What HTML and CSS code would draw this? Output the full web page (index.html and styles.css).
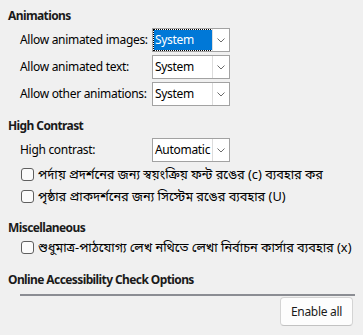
FILE: index.html
```html
<!DOCTYPE html>
<html>
<head>
<meta charset="utf-8">
<link rel="stylesheet" href="styles.css">
</head>
<body>
<div class="page">
  <section class="sec sec-anim">
    <h2 class="heading">Animations</h2>
    <div class="grid">
      <span class="label">Allow animated images:</span>
      <div class="combo focused"><span class="value"><span class="sel">System</span></span><span class="btn"><svg viewBox="0 0 8 5" width="8" height="5"><path d="M0.5 0.5 L4 4 L7.5 0.5" fill="none" stroke="#6b6b6b" stroke-width="1"/></svg></span></div>
      <span class="label">Allow animated text:</span>
      <div class="combo"><span class="value">System</span><span class="btn"><svg viewBox="0 0 8 5" width="8" height="5"><path d="M0.5 0.5 L4 4 L7.5 0.5" fill="none" stroke="#6b6b6b" stroke-width="1"/></svg></span></div>
      <span class="label">Allow other animations:</span>
      <div class="combo"><span class="value">System</span><span class="btn"><svg viewBox="0 0 8 5" width="8" height="5"><path d="M0.5 0.5 L4 4 L7.5 0.5" fill="none" stroke="#6b6b6b" stroke-width="1"/></svg></span></div>
    </div>
  </section>
  <section class="sec sec-hc">
    <h2 class="heading">High Contrast</h2>
    <div class="grid">
      <span class="label">High contrast:</span>
      <div class="combo"><span class="value">Automatic</span><span class="btn"><svg viewBox="0 0 8 5" width="8" height="5"><path d="M0.5 0.5 L4 4 L7.5 0.5" fill="none" stroke="#6b6b6b" stroke-width="1"/></svg></span></div>
    </div>
    <div class="checks">
      <label class="check"><span class="box"></span><span class="ctext">পর্দায় প্রদর্শনের জন্য স্বয়ংক্রিয় ফন্ট রঙের (c) ব্যবহার কর</span></label>
      <label class="check"><span class="box"></span><span class="ctext">পৃষ্ঠার প্রাকদর্শনের জন্য সিস্টেম রঙের ব্যবহার (U)</span></label>
    </div>
  </section>
  <section class="sec sec-misc">
    <h2 class="heading">Miscellaneous</h2>
    <div class="checks">
      <label class="check"><span class="box"></span><span class="ctext">শুধুমাত্র-পাঠযোগ্য লেখ নথিতে লেখা নির্বাচন কার্সার ব্যবহার (x)</span></label>
    </div>
  </section>
  <section class="sec sec-online">
    <h2 class="heading">Online Accessibility Check Options</h2>
    <div class="rule"></div>
    <div class="actions"><button class="button">Enable all</button></div>
  </section>
</div>
</body>
</html>
```

FILE: styles.css
```css
html, body {
  margin: 0;
  padding: 0;
  background: #f0f0f0;
}
body {
  font-family: "Noto Sans", "Noto Sans Bengali", "Lohit Bengali", "FreeSans", sans-serif;
  font-size: 12px;
  color: #000;
  letter-spacing: -0.3px;
}
.page {
  padding: 8px 8px 0 8px;
}
.heading {
  margin: 0;
  font-size: 12px;
  font-weight: 700;
  line-height: 16px;
  color: #1a1a1a;
  letter-spacing: -0.6px;
}
.grid {
  display: grid;
  grid-template-columns: 132px 78px;
  row-gap: 3px;
  padding-left: 12px;
  margin-top: 4px;
  align-items: center;
}
.label {
  white-space: nowrap;
  line-height: 16px;
}
.combo {
  display: flex;
  height: 24px;
  box-sizing: border-box;
  border: 1px solid #a2a2a2;
  background: #fff;
}
.value {
  flex: 1;
  display: flex;
  align-items: stretch;
  padding: 1px;
  line-height: 20px;
  padding-left: 2px;
}
.focused .value {
  padding: 1px 0 1px 1px;
}
.sel {
  flex: 1;
  background: #0078d7;
  color: #fff;
  outline: 1px dotted #000;
  padding-left: 1px;
  line-height: 20px;
}
.btn {
  width: 16px;
  border-left: 1px solid #dcdcdc;
  display: flex;
  align-items: center;
  justify-content: center;
}
.sec-hc { margin-top: 12px; }
.sec-misc { margin-top: 15px; }
.sec-online { margin-top: 16px; }
.checks {
  padding-left: 13px;
  display: flex;
  flex-direction: column;
  gap: 4px;
  margin-top: 3px;
}
.sec-misc .checks { margin-top: 2px; }
.check {
  display: flex;
  align-items: center;
  gap: 4px;
  height: 18px;
  line-height: 18px;
  white-space: nowrap;
}
.ctext {
  letter-spacing: 0;
  font-size: 12.8px;
}
.box {
  width: 13px;
  height: 13px;
  box-sizing: border-box;
  border: 1px solid #5f5f5f;
  border-radius: 3px;
  background: #fbfbfb;
  flex: none;
}
.rule {
  height: 2px;
  background: #8b8d93;
  margin: 6px 0 0 12px;
  width: 335px;
}
.actions {
  display: flex;
  justify-content: flex-end;
  padding-right: 2px;
  margin-top: 1px;
}
.button {
  font-family: inherit;
  font-size: 12px;
  letter-spacing: -0.3px;
  color: #1a1a1a;
  width: 73px;
  height: 29px;
  background: #fdfdfd;
  border: 1px solid #d4d4d4;
  border-bottom-color: #c2c2c2;
  border-radius: 4px;
  padding: 0;
}
```
